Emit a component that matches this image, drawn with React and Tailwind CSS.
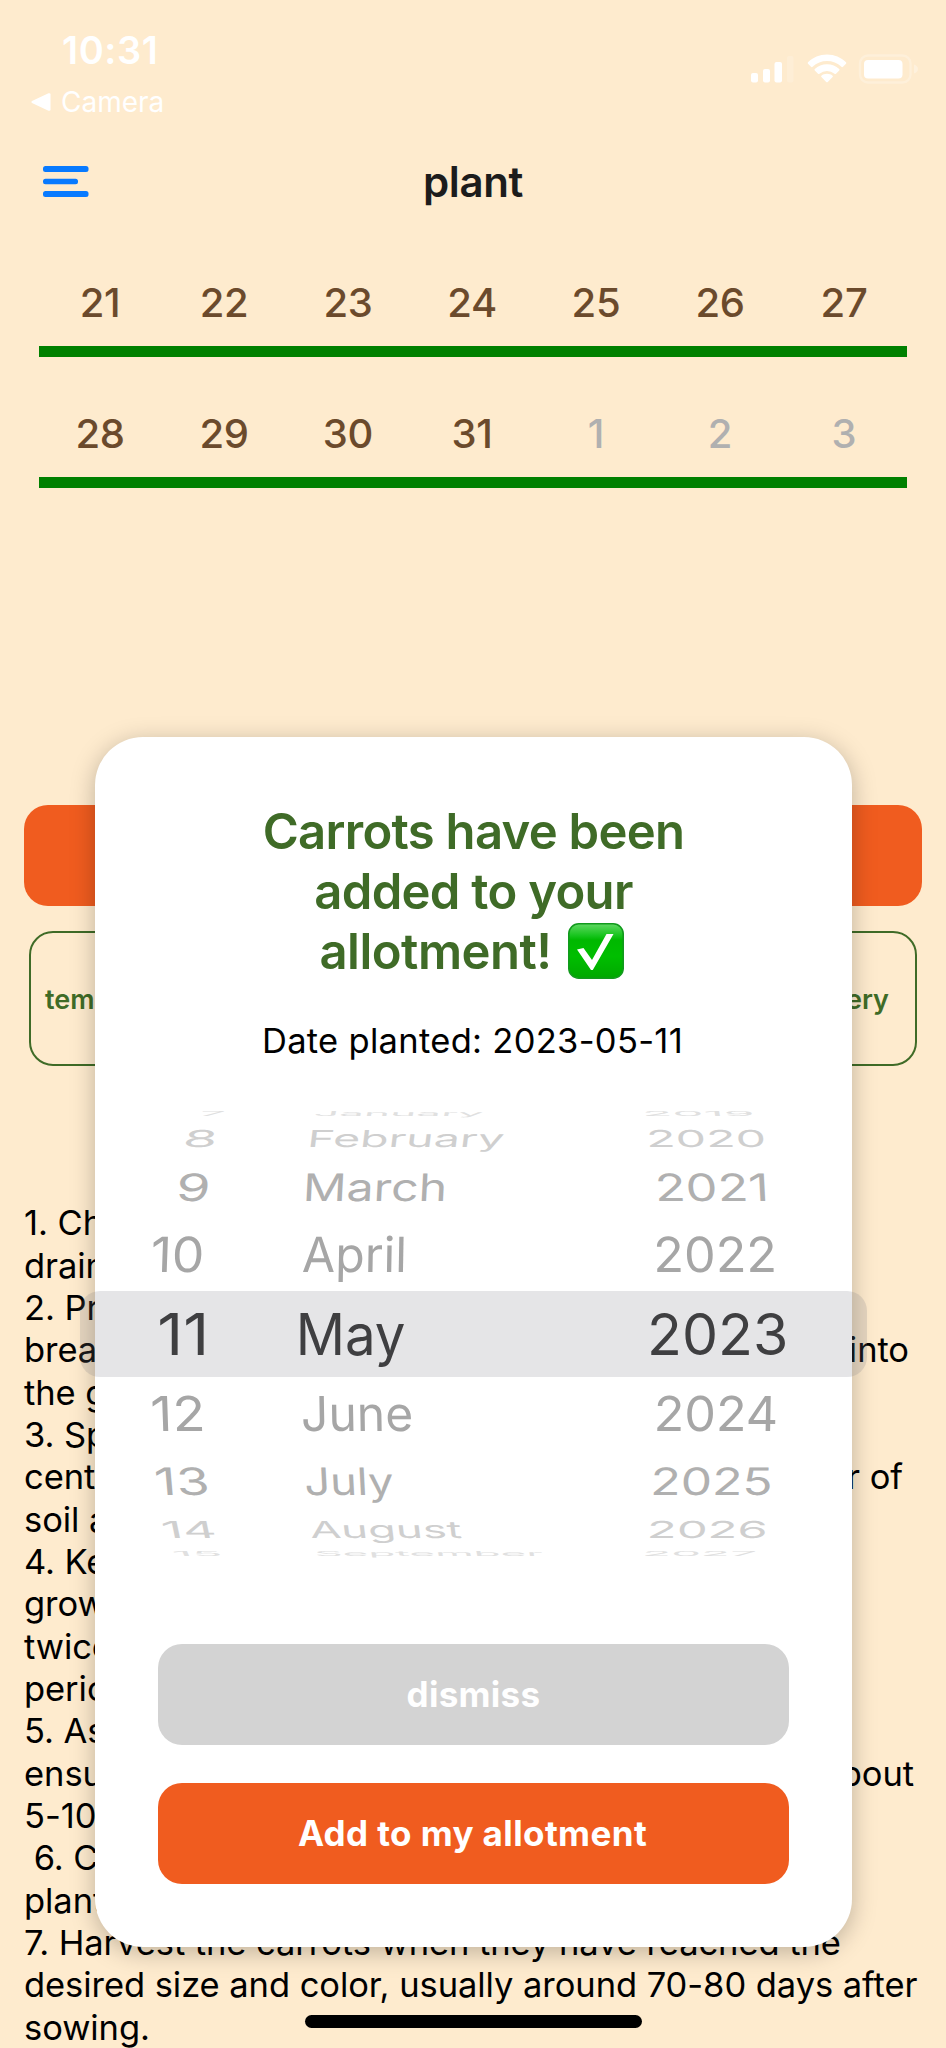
import React from "react";

const WEEKS = [
  [["21"], ["22"], ["23"], ["24"], ["25"], ["26"], ["27"]],
  [["28"], ["29"], ["30"], ["31"], ["1", true], ["2", true], ["3", true]],
];

const STEPS = [
  ["1. Choose"],
  ["draining"],
  ["2. Prep"],
  ["break", "into", "pr-[13px]"],
  ["the gr"],
  ["3. Spa"],
  ["centre", "r of", "pr-[19px]"],
  ["soil an"],
  ["4. Keep"],
  ["growth"],
  ["twice a"],
  ["periods"],
  ["5. As the"],
  ["ensure", "about", "pr-[8px]"],
  ["5-10 cm"],
  ["\u00a06. Care"],
  ["plants"],
  ["7. Harvest the carrots when they have reached the"],
  ["desired size and color, usually around 70-80 days after"],
  ["sowing."],
];

// One entry per wheel row: row height, glyph height, colour, and [text, left, width] cells.
const WHEEL = [
  { h: 6, cap: 5, tone: "text-[#e0e0e0]", skew: [-24, -12, 10], cells: [["7", 105, 22], ["January", 220, 167], ["2019", 551, 106]] },
  { h: 31, cap: 17, tone: "text-[#cfcfcf]", skew: [-12, -7, 3], cells: [["8", 89.6, 28], ["February", 215.6, 192], ["2020", 555, 114]] },
  { h: 54, cap: 27.5, tone: "text-[#b0b0b0]", skew: [-5, -3, 3], cells: [["9", 83, 28], ["March", 211.5, 137], ["2021", 564, 107]] },
  { h: 71, cap: 35.3, tone: "text-[#a6a6a6]", skew: [-2, -1, 1], cells: [["10", 57, 49], ["April", 207.5, 101], ["2022", 562, 117]] },
  { h: 82.5, cap: 41.5, tone: "text-[#3f3f41]", skew: [0, 0, 0], cells: [["11", 64.5, 45], ["May", 205.5, 104], ["2023", 556, 134]] },
  { h: 76.2, cap: 35, tone: "text-[#a6a6a6]", skew: [2, 1, -1], cells: [["12", 58, 49.5], ["June", 208, 108.5], ["2024", 562, 118.5]] },
  { h: 64.3, cap: 27.5, tone: "text-[#b0b0b0]", skew: [5, 3, -2], cells: [["13", 62.5, 50], ["July", 211.5, 87], ["2025", 558.5, 116.5]] },
  { h: 43, cap: 17, tone: "text-[#cfcfcf]", skew: [12, 7, -3], cells: [["14", 70, 50.5], ["August", 216.5, 150.5], ["2026", 555, 114.5]] },
  { h: 18, cap: 5, tone: "text-[#e0e0e0]", skew: [24, 12, -10], cells: [["15", 80, 46], ["September", 222, 226], ["2027", 550, 109.5]] },
];

const ctx = document.createElement("canvas").getContext("2d");

// Projects a flat label onto the wheel so that its glyphs fill the given width.
function project(text, left, width, cap, skew) {
  ctx.font = "400 57px Inter";
  const m = ctx.measureText(text);
  const s = width / (m.actualBoundingBoxLeft + m.actualBoundingBoxRight);
  const x = left + m.actualBoundingBoxLeft * s;
  return { transform: `translateX(${x}px) skewX(${skew}deg) scale(${s}, ${cap / 41.5})` };
}

function Wheel() {
  return (
    <div className="relative h-[462px] pt-[2px]">
      <div className="absolute top-[182px] -left-[15px] h-[86px] w-[787px] rounded-[20px] bg-[#747480]/19" />
      <div className="relative flex flex-col">
        {WHEEL.map((row) => (
          <div key={row.cells[1][0]} className={`grid grid-rows-[100%] items-end ${row.tone}`} style={{ height: row.h }}>
            {row.cells.map(([text, left, width], i) => (
              <span
                key={text}
                className="col-start-1 row-start-1 w-max origin-bottom-left text-[57px] leading-[0.7275] whitespace-nowrap"
                style={project(text, left, width, row.cap, row.skew[i])}
              >
                {text}
              </span>
            ))}
          </div>
        ))}
      </div>
    </div>
  );
}

function StatusBar() {
  return (
    <header className="flex h-[112px] items-start justify-between text-white">
      <div className="pt-[37px] pl-[31px]">
        <div className="pl-[31px] text-[38px] leading-[0.7275] font-semibold tracking-[0.6px]">10:31</div>
        <div className="mt-[27px] flex items-center gap-[10px]">
          <svg width="20" height="18" viewBox="0 0 20 18" fill="currentColor">
            <path d="M1 8 17.5 .3Q19.500-.3 19.500 1.500V16.500Q19.500 18.300 17.500 17.700L1 10Q-.2 9 1 8Z" />
          </svg>
          <span className="text-[28px] leading-[0.7275]">Camera</span>
        </div>
      </div>
      <svg className="mt-[50px] mr-[26px]" width="170" height="40" viewBox="750 50 170 40" fill="currentColor">
        <rect x="751" y="73" width="7" height="9.500" rx="2" />
        <rect x="763" y="69" width="7" height="13.500" rx="2" />
        <rect x="774.500" y="62" width="7.500" height="20.500" rx="2" />
        <rect x="787" y="56" width="6.500" height="26.500" rx="2" opacity=".18" />
        <path d="M827 54.500c7.500 0 14 3 19 7.800q.7.800 0 1.500l-3 3q-.8.700-1.600 0a21 21 0 0 0-28.800 0q-.8.700-1.600 0l-3-3q-.7-.7 0-1.500c5-4.800 11.500-7.800 19-7.800Z" />
        <path d="M827 64.200c4.800 0 9 1.800 12.200 4.700q.8.800 0 1.600l-3.200 3.200q-.7.600-1.500 0a11.500 11.500 0 0 0-15 0q-.8.600-1.500 0l-3.200-3.200q-.8-.8 0-1.600c3.200-2.900 7.400-4.700 12.200-4.700Z" />
        <path d="M827 73.800c2.200 0 4.100.7 5.600 1.900q.7.700 0 1.400l-4.800 4.800q-.8.700-1.600 0l-4.800-4.800q-.7-.7 0-1.400c1.500-1.200 3.400-1.900 5.600-1.900Z" />
        <rect x="860" y="55.500" width="50.500" height="27" rx="8" fill="none" stroke="currentColor" strokeWidth="2.400" opacity=".25" />
        <rect x="864" y="60" width="38.500" height="18.500" rx="4" />
        <path d="M914 64.500q4 1.500 4 4.500t-4 4.500Z" opacity=".3" />
      </svg>
    </header>
  );
}

function CheckBadge() {
  return (
    <svg width="56" height="56" viewBox="0 0 56 56">
      <defs>
        <linearGradient id="badge" x1="0" y1="0" x2="0" y2="1">
          <stop offset="0" stopColor="#5fd862" />
          <stop offset=".22" stopColor="#16c41c" />
          <stop offset=".3" stopColor="#00b800" />
          <stop offset=".6" stopColor="#00be00" />
          <stop offset="1" stopColor="#00a800" />
        </linearGradient>
      </defs>
      <rect x=".8" y=".8" width="54.400" height="54.400" rx="10" fill="url(#badge)" stroke="#129a1d" strokeWidth="1.600" />
      <path d="M9 26.500 15.500 25 24 37 38.500 11H45.500L24.800 47H23Z" fill="#fff" />
    </svg>
  );
}

function Modal() {
  return (
    <section className="absolute top-[737px] left-[95px] flex h-[1210px] w-[757px] flex-col rounded-[48px] bg-white pt-[77px] shadow-[0_5px_24px_rgba(0,0,0,0.25)]">
      <h2 className="flex flex-col items-center gap-[24.2px] text-[49px] leading-[0.7275] font-semibold tracking-[-0.7px] text-[#3f6b27]">
        <span>Carrots have been</span>
        <span>added to your</span>
        <span className="-ml-[4px] flex h-[35.600px] items-center gap-[16px] tracking-[-0.5px]">
          allotment!
          <CheckBadge />
        </span>
      </h2>
      <p className="mt-[58.400px] pr-[2px] text-center text-[34.500px] leading-[0.7275] tracking-[0.3px] text-black">Date planted: 2023-05-11</p>
      <div className="mt-[56px]">
        <Wheel />
      </div>
      <div className="absolute top-[907px] left-[63px] flex w-[631px] flex-col gap-[38px] text-[35px] font-bold tracking-[0.3px] text-white">
        <button className="h-[101px] rounded-[24px] bg-[#d3d3d3] pb-[1px]">dismiss</button>
        <button className="h-[101px] rounded-[24px] bg-[#f05c1f] pr-[2px] pb-[1px] tracking-[0.4px]">Add to my allotment</button>
      </div>
    </section>
  );
}

export default function App() {
  return (
    <main className="relative h-[2048px] w-[946px] overflow-hidden bg-[#feebce] font-['Inter',sans-serif]">
      <StatusBar />
      <nav className="grid h-[139px] grid-cols-3 items-start px-[43px] pt-[54px]">
        <svg width="46" height="31" viewBox="0 0 46 31" fill="#087aff">
          <rect y="0" width="45.500" height="6" rx="2.500" />
          <rect y="12.800" width="35" height="5.400" rx="2.500" />
          <rect y="25" width="45.500" height="6" rx="2.500" />
        </svg>
        <h1 className="justify-self-center text-[42px] leading-[31px] font-semibold tracking-[-0.4px] text-[#1c1c1c]">plant</h1>
      </nav>

      <div className="mx-[39px] flex h-[554px] flex-col">
        {WEEKS.map((week) => (
          <div key={week[0][0]} className="grid h-[131px] grid-cols-7 content-start pt-[37px]">
            {week.map(([day, muted]) => (
              <span
                key={day}
                className={`pr-[2px] text-center text-[40px] leading-[0.7275] font-medium tracking-[-0.3px] ${muted ? "text-[#b0b0b0]" : "text-[#6b4a2c]"}`}
              >
                {day}
              </span>
            ))}
            <div className="col-span-7 mt-[29px] h-[10.500px] bg-[#008000]" />
          </div>
        ))}
      </div>

      <div className="mx-[24px] h-[101px] rounded-[24px] bg-[#f05c1f]" />
      <div className="mx-[29px] mt-[25px] flex h-[135px] items-center justify-between rounded-[24px] border-[2.500px] border-[#3f6b27] pt-[3px] pr-[26px] pl-[14px] text-[27px] font-semibold text-[#3f6b27]">
        <span>temp</span>
        <span>very</span>
      </div>

      <div className="mt-[136px] px-[24px] text-[34.500px] tracking-[-0.06px] whitespace-nowrap text-black">
        {STEPS.map(([start, end, inset]) => (
          <p key={start} className={`flex h-[42.350px] items-center justify-between leading-[42px] ${inset || ""}`}>
            <span>{start}</span>
            {end && <span>{end}</span>}
          </p>
        ))}
      </div>

      <Modal />
      <div className="absolute top-[2015px] left-[305px] h-[12.500px] w-[337px] rounded-full bg-black" />
    </main>
  );
}
